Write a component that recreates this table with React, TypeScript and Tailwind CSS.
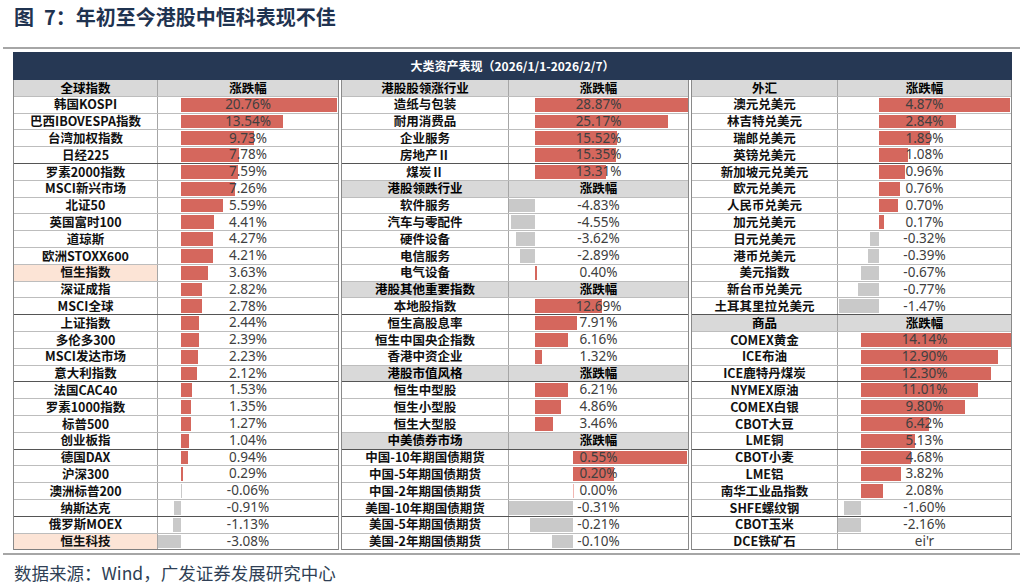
type Section = {
  head: string;
  z: number; // zero axis offset inside the value cell
  k: number; // px per 1%
  rows: [string, number | string, boolean?][];
};

type Group = { width: number; nameW: number; sections: Section[] };

const left: Group = {
  width: 326,
  nameW: 144,
  sections: [
    {
      head: "全球指数",
      z: 23,
      k: 7.5,
      rows: [
        ["韩国KOSPI", 20.76],
        ["巴西IBOVESPA指数", 13.54],
        ["台湾加权指数", 9.73],
        ["日经225", 7.78],
        ["罗素2000指数", 7.59],
        ["MSCI新兴市场", 7.26],
        ["北证50", 5.59],
        ["英国富时100", 4.41],
        ["道琼斯", 4.27],
        ["欧洲STOXX600", 4.21],
        ["恒生指数", 3.63, true],
        ["深证成指", 2.82],
        ["MSCI全球", 2.78],
        ["上证指数", 2.44],
        ["多伦多300", 2.39],
        ["MSCI发达市场", 2.23],
        ["意大利指数", 2.12],
        ["法国CAC40", 1.53],
        ["罗素1000指数", 1.35],
        ["标普500", 1.27],
        ["创业板指", 1.04],
        ["德国DAX", 0.94],
        ["沪深300", 0.29],
        ["澳洲标普200", -0.06],
        ["纳斯达克", -0.91],
        ["俄罗斯MOEX", -1.13],
        ["恒生科技", -3.08, true],
      ],
    },
  ],
};

const middle: Group = {
  width: 348,
  nameW: 167,
  sections: [
    {
      head: "港股股领涨行业",
      z: 26,
      k: 5.3,
      rows: [
        ["造纸与包装", 28.87],
        ["耐用消费品", 25.17],
        ["企业服务", 15.52],
        ["房地产Ⅱ", 15.35],
        ["煤炭Ⅱ", 13.31],
      ],
    },
    {
      head: "港股领跌行业",
      z: 26,
      k: 5.3,
      rows: [
        ["软件服务", -4.83],
        ["汽车与零配件", -4.55],
        ["硬件设备", -3.62],
        ["电信服务", -2.89],
        ["电气设备", 0.4],
      ],
    },
    {
      head: "港股其他重要指数",
      z: 26,
      k: 5.3,
      rows: [
        ["本地股指数", 12.69],
        ["恒生高股息率", 7.91],
        ["恒生中国央企指数", 6.16],
        ["香港中资企业", 1.32],
      ],
    },
    {
      head: "港股市值风格",
      z: 26,
      k: 5.3,
      rows: [
        ["恒生中型股", 6.21],
        ["恒生小型股", 4.86],
        ["恒生大型股", 3.46],
      ],
    },
    {
      head: "中美债券市场",
      z: 64,
      k: 207,
      rows: [
        ["中国-10年期国债期货", 0.55],
        ["中国-5年期国债期货", 0.2],
        ["中国-2年期国债期货", 0],
        ["美国-10年期国债期货", -0.31],
        ["美国-5年期国债期货", -0.21],
        ["美国-2年期国债期货", -0.1],
      ],
    },
  ],
};

const right: Group = {
  width: 321,
  nameW: 146,
  sections: [
    {
      head: "外汇",
      z: 41,
      k: 27,
      rows: [
        ["澳元兑美元", 4.87],
        ["林吉特兑美元", 2.84],
        ["瑞郎兑美元", 1.89],
        ["英镑兑美元", 1.08],
        ["新加坡元兑美元", 0.96],
        ["欧元兑美元", 0.76],
        ["人民币兑美元", 0.7],
        ["加元兑美元", 0.17],
        ["日元兑美元", -0.32],
        ["港币兑美元", -0.39],
        ["美元指数", -0.67],
        ["新台币兑美元", -0.77],
        ["土耳其里拉兑美元", -1.47],
      ],
    },
    {
      head: "商品",
      z: 23,
      k: 10.6,
      rows: [
        ["COMEX黄金", 14.14],
        ["ICE布油", 12.9],
        ["ICE鹿特丹煤炭", 12.3],
        ["NYMEX原油", 11.01],
        ["COMEX白银", 9.8],
        ["CBOT大豆", 6.42],
        ["LME铜", 5.13],
        ["CBOT小麦", 4.68],
        ["LME铝", 3.82],
        ["南华工业品指数", 2.08],
        ["SHFE螺纹钢", -1.6],
        ["CBOT玉米", -2.16],
        ["DCE铁矿石", "ei'r"],
      ],
    },
  ],
};

// row borders that come out darker in the source picture
const darkLines = [4, 13, 17, 21, 25];

function Bar({ v, z, k }: { v: number; z: number; k: number }) {
  if (v === 0) {
    return <div className="absolute top-[1px] bottom-[1px] w-[1px] bg-[#f1b7b2]" style={{ left: z }} />;
  }
  const l = Math.max(0, z + Math.min(v, 0) * k);
  const w = Math.abs(v) * k;
  return (
    <div
      className={v > 0 ? "absolute top-[1px] bottom-[1px] bg-[#d5675d]" : "absolute top-[1px] bottom-[1px] bg-[#c9c9c9]"}
      style={{ left: l, width: w }}
    />
  );
}

function GroupTable({ g }: { g: Group }) {
  const lines: JSX.Element[] = [];
  let i = 0;
  g.sections.forEach((s) => {
    const idx = i++;
    const b = darkLines.includes(idx) ? "border-[#555]" : "border-[#bdbdbd]";
    lines.push(
      <div key={"h" + idx} className={`flex h-[16.8px] border-b bg-[#d9d9d9] ${b}`}>
        <div className="flex items-center justify-center border-r border-[#a6a6a6] font-bold" style={{ width: g.nameW }}>
          {s.head}
        </div>
        <div className="flex flex-1 items-center justify-center font-bold">涨跌幅</div>
      </div>
    );
    s.rows.forEach(([name, v, hl]) => {
      const idx = i++;
      const last = idx === 27;
      const b = last ? "border-[#7f7f7f]" : darkLines.includes(idx) ? "border-[#555]" : "border-[#bdbdbd]";
      lines.push(
        <div key={name} className={`flex h-[16.8px] border-b ${b}`}>
          <div
            className={`flex items-center justify-center border-r border-[#a6a6a6] font-bold text-[#111] ${hl ? "bg-[#fce4d6]" : ""}`}
            style={{ width: g.nameW }}
          >
            {name}
          </div>
          <div className="relative flex flex-1 items-center justify-center">
            {typeof v === "number" && <Bar v={v} z={s.z} k={s.k} />}
            <span className="relative text-[13.5px] font-normal text-[#404040] font-['Noto_Sans','Noto_Sans_CJK_SC',sans-serif]">
              {typeof v === "number" ? v.toFixed(2) + "%" : v}
            </span>
          </div>
        </div>
      );
    });
  });
  return (
    <div className="border-x border-[#8a8a8a]" style={{ width: g.width }}>
      {lines}
    </div>
  );
}

export default function App() {
  return (
    <div className="h-[585px] w-[1024px] overflow-hidden bg-white font-['Noto_Sans_CJK_SC',sans-serif] leading-none">
      <div className="flex h-[34px] items-center pl-[14px] text-[20px] font-bold text-[#1f3350]">
        <span>图</span>
        <span className="ml-[10px]">7：年初至今港股中恒科表现不佳</span>
      </div>
      <div className="ml-[3px] mt-[13px] h-[2px] w-[1017px] bg-[#a6a6a6]" />
      <div className="ml-[13px] mt-[3px] w-[999px] text-[12.5px]">
        <div className="flex h-[28px] items-center justify-center bg-[#263854] text-[12px] font-bold text-white">
          大类资产表现（2026/1/1-2026/2/7）
        </div>
        <div className="flex gap-[2px]">
          <GroupTable g={left} />
          <GroupTable g={middle} />
          <GroupTable g={right} />
        </div>
      </div>
      <div className="ml-[3px] mt-[3px] h-[2px] w-[1017px] bg-[#a6a6a6]" />
      <div className="mt-[6px] flex h-[22px] items-center pl-[14px] text-[17.5px] text-[#2f3f55]">
        数据来源：Wind，广发证券发展研究中心
      </div>
    </div>
  );
}
